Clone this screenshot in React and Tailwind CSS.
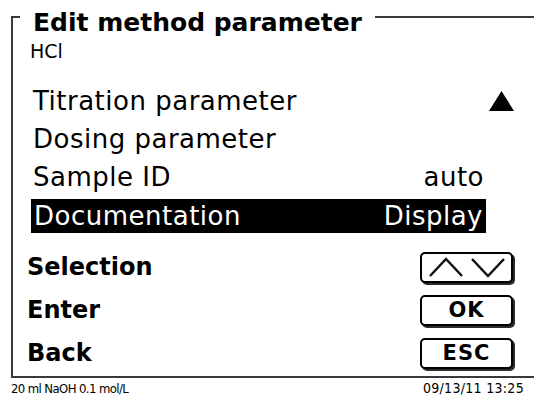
import React from "react";

const rows = [
  { label: "Titration parameter", value: "", arrow: true },
  { label: "Dosing parameter", value: "" },
  { label: "Sample ID", value: "auto" },
];

function KeyButton({ children }) {
  return (
    <div className="w-[93px] h-[31px] rounded-[5px] border-2 border-black bg-white shadow-[2px_2px_0_0_#2a2a2a] flex items-center justify-center text-[21px] font-bold leading-none tracking-[1px]">
      {children}
    </div>
  );
}

function Chevrons() {
  return (
    <svg width="78" height="22" viewBox="0 0 78 22">
      <polyline points="2,20 18,3 34,20" fill="none" stroke="#111" strokeWidth="2.5" />
      <polyline points="44,3 60,20 76,3" fill="none" stroke="#111" strokeWidth="2.5" />
    </svg>
  );
}

export default function App() {
  return (
    <div
      className="w-[534px] h-[401px] bg-white text-black overflow-hidden"
      style={{ fontFamily: '"DejaVu Sans", Verdana, sans-serif' }}
    >
      <div className="ml-[11px] mt-[16px] h-[362px] border-l-2 border-t-2 border-b-2 border-[#3a3a3a] flex flex-col">
        <div className="-mt-[10px] ml-[7px] self-start h-[29px] px-[13px] bg-white flex items-center text-[25px] font-bold leading-none">
          Edit method parameter
        </div>
        <div className="mt-[4px] h-[20px] pl-[17px] flex items-center text-[19px] leading-none">
          HCl
        </div>

        <div className="mt-[21px] flex flex-col text-[26px] leading-none tracking-[0.5px]">
          {rows.map((r) => (
            <div key={r.label} className="h-[38px] flex items-center">
              <div className="ml-[18px] w-[455px] px-[2px] flex justify-between">
                <span>{r.label}</span>
                <span>{r.value}</span>
              </div>
              {r.arrow && (
                <svg className="ml-[3px]" width="25" height="20" viewBox="0 0 25 20">
                  <polygon points="12.5,0 25,20 0,20" fill="#000" />
                </svg>
              )}
            </div>
          ))}
          <div className="mt-[3px] h-[34px] flex items-center">
            <div className="ml-[18px] w-[455px] h-full px-[3px] bg-black text-white flex items-center justify-between">
              <span>Documentation</span>
              <span>Display</span>
            </div>
          </div>
        </div>

        <div className="mt-[17px] flex flex-col gap-[9px] text-[24px] font-bold leading-none">
          <div className="h-[34px] flex items-center justify-between pl-[14px] pr-[21px]">
            <span>Selection</span>
            <KeyButton>
              <Chevrons />
            </KeyButton>
          </div>
          <div className="h-[34px] flex items-center justify-between pl-[14px] pr-[21px]">
            <span>Enter</span>
            <KeyButton>OK</KeyButton>
          </div>
          <div className="h-[34px] flex items-center justify-between pl-[14px] pr-[21px]">
            <span>Back</span>
            <KeyButton>ESC</KeyButton>
          </div>
        </div>
      </div>

      <div
        className="h-[20px] pl-[11px] pr-[10px] flex items-center justify-between text-[13px] leading-none"
        style={{ fontFamily: '"DejaVu Sans Condensed", "DejaVu Sans", sans-serif' }}
      >
        <span className="tracking-[-0.6px]">20 ml NaOH 0.1 mol/L</span>
        <span className="text-[14px] tracking-[0.3px]">09/13/11 13:25</span>
      </div>
    </div>
  );
}
